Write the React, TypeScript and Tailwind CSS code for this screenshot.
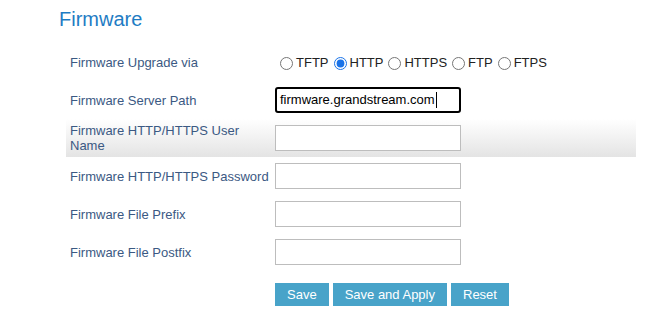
import React from "react";

const font = { fontFamily: '"Liberation Sans", Arial, sans-serif' };

function Row({ label, children, highlight }: { label: React.ReactNode; children?: React.ReactNode; highlight?: boolean }) {
  return (
    <div className={`flex h-[38px] items-center ${highlight ? "bg-gradient-to-b from-white to-[#e4e4e4]" : ""}`}>
      <div className="w-[209px] pl-[4px] text-[13px] leading-[15px] text-[#3b5983]">{label}</div>
      <div className="flex items-center">{children}</div>
    </div>
  );
}

function TextBox() {
  return <div className="h-[26px] w-[186px] border border-[#bdbdbd] bg-white" />;
}

function Radio({ label, checked }: { label: string; checked?: boolean }) {
  return (
    <label className="flex items-center text-[13px] text-[#222]">
      <input type="radio" name="via" defaultChecked={checked} className="m-0 ml-[5px] mr-[3px] h-[13px] w-[13px] accent-[#1a73e8]" />
      <span>{label}</span>
    </label>
  );
}

export default function App() {
  return (
    <div className="h-[320px] w-[666px] bg-white" style={font}>
      <div className="pt-[7px] pl-[59px] text-[20px] leading-[24px] text-[#1e7cc4]">Firmware</div>
      <div className="ml-[66px] mt-[12px] w-[570px]">
        <Row label="Firmware Upgrade via">
          <div className="flex items-center pt-[2px]">
            <Radio label="TFTP" />
            <Radio label="HTTP" checked />
            <Radio label="HTTPS" />
            <Radio label="FTP" />
            <Radio label="FTPS" />
          </div>
        </Row>
        <Row label="Firmware Server Path">
          <div className="flex h-[26px] w-[186px] items-center rounded-[3px] border-2 border-black bg-white pl-[3px] text-[13px] text-black">
            <span>firmware.grandstream.com</span>
            <span className="ml-[1px] inline-block h-[16px] w-[1px] bg-black" />
          </div>
        </Row>
        <Row label={<>Firmware HTTP/HTTPS User<br />Name</>} highlight>
          <TextBox />
        </Row>
        <Row label="Firmware HTTP/HTTPS Password">
          <TextBox />
        </Row>
        <Row label="Firmware File Prefix">
          <TextBox />
        </Row>
        <Row label="Firmware File Postfix">
          <TextBox />
        </Row>
        <div className="mt-[12px] flex gap-[4px] pl-[209px]">
          {["Save", "Save and Apply", "Reset"].map((b) => (
            <button key={b} className="h-[23px] bg-[#48a3c9] px-[12px] text-[13px] text-white">
              {b}
            </button>
          ))}
        </div>
      </div>
    </div>
  );
}
